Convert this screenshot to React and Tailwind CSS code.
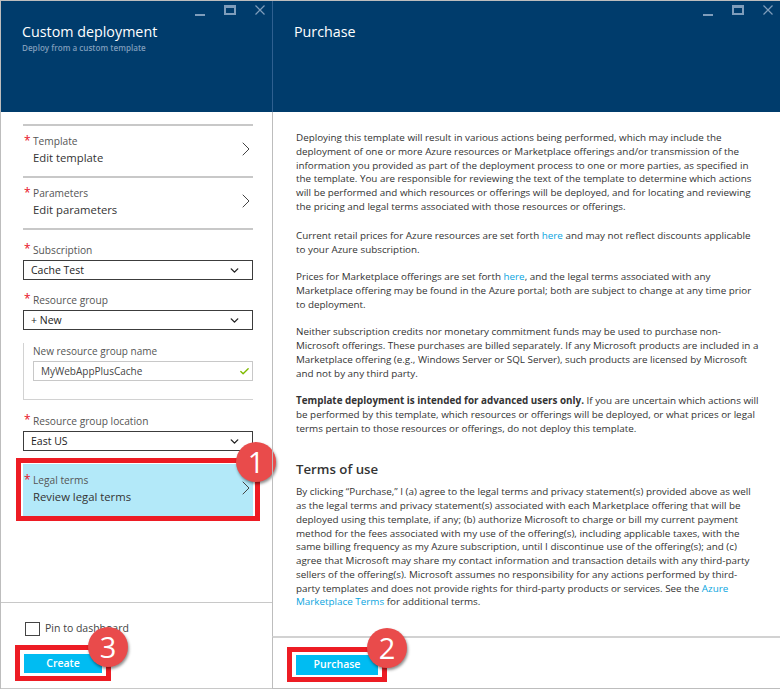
import { ChevronRight, ChevronDown, Check } from "lucide-react";

const font = "font-['Open_Sans','Noto_Sans',sans-serif]";

function WindowButtons() {
  return (
    <div className="absolute top-[4px] right-[7px] flex items-start gap-[19px]">
      <span className="mt-[9px] h-[2px] w-[10px] bg-[#7f9dbb]" />
      <span className="h-[10px] w-[12px] border-2 border-t-[3px] border-[#7f9dbb]" />
      <svg width="10" height="10" viewBox="0 0 10 10" className="text-[#7f9dbb]">
        <path d="M0.5 0.5 9.5 9.5 M9.5 0.5 0.5 9.5" stroke="currentColor" strokeWidth="1.2" fill="none" />
      </svg>
    </div>
  );
}

function Star() {
  return <span className="absolute left-[1px] top-[-2px] text-[12px] text-[#e81123]">*</span>;
}

function NavRow({ label, value }) {
  return (
    <div className="flex h-[52px] items-center justify-between border-t-2 border-[#c8c8c8]">
      <div className="relative mb-[2px] pl-[10px]">
        <Star />
        <div className="text-[10.2px] leading-[14px] text-[#555]">{label}</div>
        <div className="mt-[1px] text-[11.3px] leading-[18px] text-[#333]">{value}</div>
      </div>
      <ChevronRight size={24} strokeWidth={1} className="mr-[-5px] mt-[-5px] text-[#444]" />
    </div>
  );
}

function SelectField({ label, value }) {
  return (
    <div>
      <div className="relative pl-[10px] text-[10.2px] leading-[15px] text-[#555]">
        <Star />
        {label}
      </div>
      <div className="mt-[2px] flex h-[20px] items-center justify-between border border-[#3c3c3c] pl-[7px] pr-[11px] pt-[1px] text-[10.5px] text-[#222]">
        {value}
        <ChevronDown size={13} strokeWidth={2.6} className="text-[#222]" />
      </div>
    </div>
  );
}

function Badge({ n, className }) {
  return (
    <div
      className={`absolute flex h-[40px] w-[40px] items-center justify-center rounded-full bg-[#e94b4b] text-[29px] text-white shadow-[1px_2px_3px_rgba(0,0,0,0.45)] ${className}`}
    >
      {n}
    </div>
  );
}

function Header({ title, subtitle, className = "" }) {
  return (
    <div className={`relative h-[111px] shrink-0 bg-[#003c6c] pl-[21px] pt-[21px] ${className}`}>
      <WindowButtons />
      <div className="text-[14.3px] leading-[20px] text-white">{title}</div>
      {subtitle && <div className="text-[8.1px] font-semibold leading-[12px] text-[#7f9dbb]">{subtitle}</div>}
    </div>
  );
}

function CustomDeployment() {
  return (
    <div className="relative flex w-[272px] shrink-0 flex-col border-l border-[#bdbdbd]">
      <Header title="Custom deployment" subtitle="Deploy from a custom template" />
      <div className="flex-1 pl-[22px] pr-[19px] pt-[12px]">
        <NavRow label="Template" value="Edit template" />
        <NavRow label="Parameters" value="Edit parameters" />
        <div className="border-t-2 border-[#c8c8c8] pt-[13px]">
          <SelectField label="Subscription" value="Cache Test" />
          <div className="mt-[13px]">
            <SelectField label="Resource group" value="+ New" />
          </div>
          <div className="mt-[13px] h-[57px] border-b border-l border-[#d2d2d2] pl-[9px] pt-[1px]">
            <div className="text-[10px] leading-[15px] text-[#555]">New resource group name</div>
            <div className="mt-[2px] flex h-[20px] items-center justify-between border border-[#c8c8c8] pl-[7px] pr-[2px] text-[10px] text-[#444]">
              MyWebAppPlusCache
              <Check size={11} strokeWidth={3} className="text-[#7fba00]" />
            </div>
          </div>
          <div className="mt-[14px]">
            <SelectField label="Resource group location" value="East US" />
          </div>
        </div>
        <div className="relative mt-[13px] border-b-2 border-[#c8d8dc] bg-[#b3e9f9]">
          <div className="flex h-[52px] items-center justify-between">
            <div className="relative mb-[2px] pl-[10px]">
              <Star />
              <div className="text-[10.2px] leading-[14px] text-[#555]">Legal terms</div>
              <div className="mt-[1px] text-[11.3px] leading-[18px] text-[#333]">Review legal terms</div>
            </div>
            <ChevronRight size={24} strokeWidth={1} className="mr-[-5px] mt-[-4px] text-[#444]" />
          </div>
          <div className="absolute -left-[7px] -right-[7px] -top-[6px] -bottom-[5px] border-[5px] border-[#ed1c24]" />
          <Badge n="1" className="right-[-23px] top-[-22px]" />
        </div>
      </div>
      <div className="relative h-[87px] shrink-0 border-y border-[#c8c8c8] pl-[23px] pt-[18px]">
        <div className="ml-[1px] flex items-center gap-[5px] text-[10.5px] text-[#444]">
          <span className="h-[14px] w-[15px] border border-[#444]" />
          Pin to dashboard
        </div>
        <div className="relative mt-[17px] w-[78px]">
          <div className="flex h-[19px] items-center justify-center bg-[#00bcf2] pt-[1px] text-[10.5px] font-semibold text-white">Create</div>
          <div className="absolute -left-[9px] -right-[9px] -top-[9px] -bottom-[8px] border-[5px] border-[#ed1c24]" />
        </div>
        <Badge n="3" className="left-[87px] top-[24px]" />
      </div>
    </div>
  );
}

function Para({ className = "mb-[13.75px]", children }) {
  return <p className={className}>{children}</p>;
}

function Purchase() {
  return (
    <div className="relative flex flex-1 flex-col">
      <Header title="Purchase" className="border-l border-[#2f6090]" />
      <div className="flex-1 overflow-hidden whitespace-nowrap border-l border-[#bdbdbd] pl-[23px] pt-[19px] text-[9.86px] leading-[13.75px] text-[#333]">
        <Para className="mb-[15.5px]">
          Deploying this template will result in various actions being performed, which may include the<br />
          deployment of one or more Azure resources or Marketplace offerings and/or transmission of the<br />
          information you provided as part of the deployment process to one or more parties, as specified in<br />
          the template. You are responsible for reviewing the text of the template to determine which actions<br />
          will be performed and which resources or offerings will be deployed, and for locating and reviewing<br />
          the pricing and legal terms associated with those resources or offerings.
        </Para>
        <Para>
          Current retail prices for Azure resources are set forth <span className="text-[#0aa5e0]">here</span> and may not reflect discounts applicable<br />
          to your Azure subscription.
        </Para>
        <Para>
          Prices for Marketplace offerings are set forth <span className="text-[#0aa5e0]">here</span>, and the legal terms associated with any<br />
          Marketplace offering may be found in the Azure portal; both are subject to change at any time prior<br />
          to deployment.
        </Para>
        <Para>
          Neither subscription credits nor monetary commitment funds may be used to purchase non-<br />
          Microsoft offerings. These purchases are billed separately. If any Microsoft products are included in a<br />
          Marketplace offering (e.g., Windows Server or SQL Server), such products are licensed by Microsoft<br />
          and not by any third party.
        </Para>
        <Para>
          <b className="font-bold">Template deployment is intended for advanced users only.</b> If you are uncertain which actions will<br />
          be performed by this template, which resources or offerings will be deployed, or what prices or legal<br />
          terms pertain to those resources or offerings, do not deploy this template.
        </Para>
        <h2 className="mb-[6px] mt-[24px] text-[13.25px] font-semibold leading-[20px] text-[#333]">Terms of use</h2>
        <Para className="">
          By clicking “Purchase,” I (a) agree to the legal terms and privacy statement(s) provided above as well<br />
          as the legal terms and privacy statement(s) associated with each Marketplace offering that will be<br />
          deployed using this template, if any; (b) authorize Microsoft to charge or bill my current payment<br />
          method for the fees associated with my use of the offering(s), including applicable taxes, with the<br />
          same billing frequency as my Azure subscription, until I discontinue use of the offering(s); and (c)<br />
          agree that Microsoft may share my contact information and transaction details with any third-party<br />
          sellers of the offering(s). Microsoft assumes no responsibility for any actions performed by third-<br />
          party templates and does not provide rights for third-party products or services. See the <span className="text-[#0aa5e0]">Azure</span><br />
          <span className="text-[#0aa5e0]">Marketplace Terms</span> for additional terms.
        </Para>
      </div>
      <div className="relative h-[53px] shrink-0 border-l border-t-2 border-b border-l-[#bdbdbd] border-t-[#d2d2d2] border-b-[#bdbdbd] pl-[23px] pt-[17px]">
        <div className="relative w-[82px]">
          <div className="flex h-[20px] items-center justify-center bg-[#00bcf2] text-[10.5px] font-semibold text-white">Purchase</div>
          <div className="absolute -left-[9px] -right-[9px] -top-[8px] -bottom-[7px] border-[5px] border-[#ed1c24]" />
        </div>
        <Badge n="2" className="left-[94px] top-[-10px]" />
      </div>
    </div>
  );
}

export default function App() {
  return (
    <div className={`flex h-[690px] w-[780px] overflow-hidden border-t border-[#bdbdbd] bg-white pb-[1px] ${font}`}>
      <CustomDeployment />
      <Purchase />
    </div>
  );
}
